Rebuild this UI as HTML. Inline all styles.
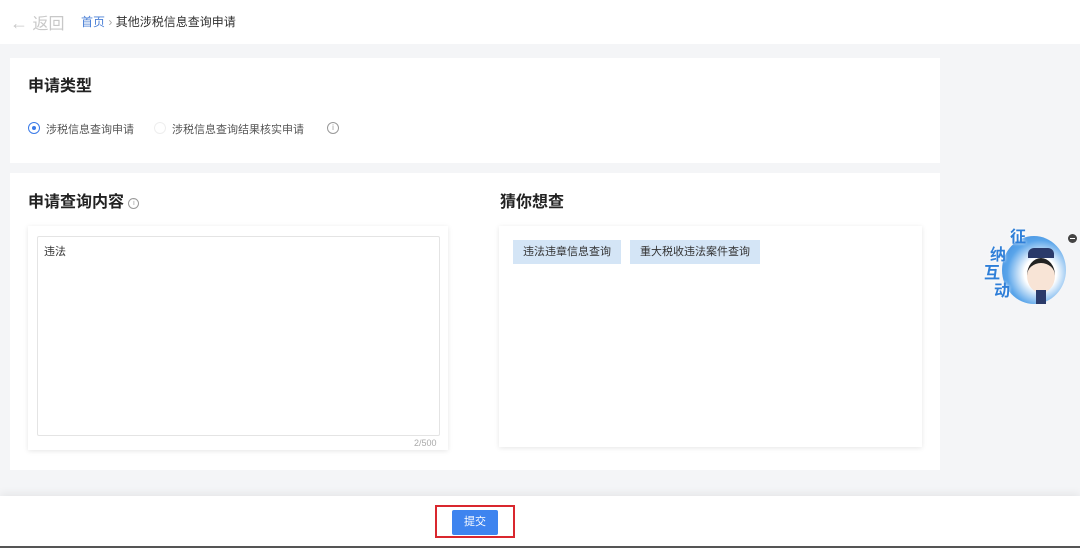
<!DOCTYPE html><html><head><meta charset="utf-8"><style>
body{margin:0;width:1080px;height:548px;background:#f4f5f7;font-family:"Liberation Sans","Noto Sans CJK SC",sans-serif;position:relative;overflow:hidden}
.a{position:absolute}
.card{background:#fff}
</style></head><body>
<div class="a" style="left:0;top:0;width:1080px;height:44px;background:#fff"></div>
<div class="a" style="left:10px;top:10px;font-size:16px;color:#c8c8c8"><span style="font-size:18px">←</span> 返回</div>
<div class="a" style="left:81px;top:13px;font-size:12px;color:#4a7fd6">首页 <span style="color:#aaa">›</span> <span style="color:#333">其他涉税信息查询申请</span></div>
<div class="a card" style="left:10px;top:58px;width:930px;height:105px"></div>
<div class="a" style="left:28px;top:72px;font-size:16px;font-weight:bold;color:#222">申请类型</div>
<div class="a" style="left:28px;top:122px;width:10px;height:10px;border:1px solid #3b7be8;border-radius:50%"><div class="a" style="left:3px;top:3px;width:4px;height:4px;border-radius:50%;background:#3b7be8"></div></div>
<div class="a" style="left:46px;top:121px;font-size:11px;color:#555">涉税信息查询申请</div>
<div class="a" style="left:154px;top:122px;width:10px;height:10px;border:1px solid #eee;border-radius:50%"></div>
<div class="a" style="left:172px;top:121px;font-size:11px;color:#555">涉税信息查询结果核实申请</div>
<div class="a" style="left:327px;top:122px;width:10px;height:10px;border:1px solid #999;border-radius:50%;font-size:8px;text-align:center;line-height:10px;color:#999">i</div>
<div class="a card" style="left:10px;top:173px;width:930px;height:297px"></div>
<div class="a" style="left:28px;top:188px;font-size:16px;font-weight:bold;color:#222">申请查询内容 <span style="font-weight:normal;color:#999;border:1px solid #999;border-radius:50%;display:inline-block;width:9px;height:9px;line-height:9px;text-align:center;font-size:7px;vertical-align:2px">i</span></div>
<div class="a" style="left:500px;top:188px;font-size:16px;font-weight:bold;color:#222">猜你想查</div>
<div class="a" style="left:28px;top:226px;width:420px;height:224px;background:#fff;box-shadow:0 1px 5px rgba(0,0,0,.1)"></div>
<div class="a" style="left:37px;top:236px;width:401px;height:198px;border:1px solid #e4e4e4;border-radius:2px"></div>
<div class="a" style="left:44px;top:243px;font-size:11px;color:#333">违法</div>
<div class="a" style="left:414px;top:438px;font-size:9px;color:#aaa">2/500</div>
<div class="a" style="left:499px;top:226px;width:423px;height:221px;background:#fff;box-shadow:0 1px 5px rgba(0,0,0,.1)"></div>
<div class="a" style="left:513px;top:240px;width:108px;height:24px;background:#d4e5f6;font-size:11px;color:#333;text-align:center;line-height:24px">违法违章信息查询</div>
<div class="a" style="left:630px;top:240px;width:130px;height:24px;background:#d4e5f6;font-size:11px;color:#333;text-align:center;line-height:24px">重大税收违法案件查询</div>
<div class="a" style="left:1002px;top:236px;width:64px;height:68px;border-radius:50%;background:radial-gradient(circle at 60% 55%,#fff 30%,#5aa5ea 62%,#2f7fd8)"></div>
<div class="a" style="left:1028px;top:248px;width:26px;height:10px;background:#2a3a6a;border-radius:6px 6px 0 0"></div>
<div class="a" style="left:1027px;top:258px;width:28px;height:30px;border-radius:50%;background:#f8e4d6;border-top:5px solid #222"></div>
<div class="a" style="left:1036px;top:290px;width:10px;height:14px;background:#2a3a6a"></div>
<div class="a" style="left:984px;top:229px;font-size:16px;font-weight:bold;color:#2f7fd8;line-height:18px;text-shadow:0 0 3px #fff"><div style="margin-left:26px">征</div><div style="margin-left:6px">纳</div><div>互</div><div style="margin-left:10px">动</div></div>
<div class="a" style="left:1068px;top:234px;width:9px;height:9px;border-radius:50%;background:#444"><div class="a" style="left:2px;top:4px;width:5px;height:1px;background:#fff"></div></div>
<div class="a" style="left:0;top:496px;width:1080px;height:50px;background:#fff;box-shadow:0 -3px 8px rgba(0,0,0,.06)"></div>
<div class="a" style="left:435px;top:505px;width:80px;height:33px;border:2px solid #d9272e;box-sizing:border-box"></div>
<div class="a" style="left:452px;top:510px;width:46px;height:25px;background:#3e84ef;border-radius:2px;color:#fff;font-size:11px;text-align:center;line-height:25px">提交</div>
<div class="a" style="left:0;top:546px;width:1080px;height:2px;background:#555"></div>
</body></html>
